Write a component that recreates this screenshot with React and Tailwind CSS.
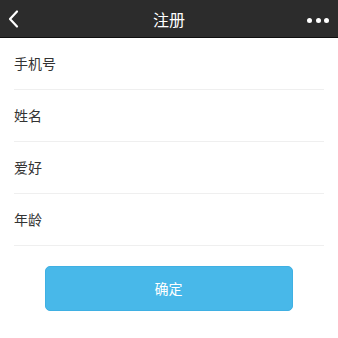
const fields = ['手机号', '姓名', '爱好', '年龄']

export default function App() {
  return (
    <div className="w-[338px] h-[338px] bg-white overflow-hidden" style={{ fontFamily: '"Noto Sans CJK SC", "Noto Sans", sans-serif' }}>
      {/* header */}
      <div className="relative h-[38px] bg-[#2c2c2c] border-b border-[#0f0f0f] flex items-center justify-center">
        <button className="absolute left-[5px] top-[9px] text-white">
          <svg width="16" height="20" viewBox="0 0 16 20" fill="none">
            <path d="M12 2.5 L5 10 L12 17.5" stroke="white" strokeWidth="2.2" strokeLinecap="round" strokeLinejoin="round" />
          </svg>
        </button>
        <span className="text-white text-[16px] leading-none">注册</span>
        <div className="absolute right-[9px] top-[18px] flex gap-[3.5px]">
          <span className="w-[5px] h-[5px] rounded-full bg-white" />
          <span className="w-[5px] h-[5px] rounded-full bg-white" />
          <span className="w-[5px] h-[5px] rounded-full bg-white" />
        </div>
      </div>

      {/* form rows */}
      <div className="px-[14px]">
        {fields.map((f) => (
          <div key={f} className="h-[52px] border-b border-[#efefef] flex items-center">
            <span className="text-[14px] text-[#333]">{f}</span>
          </div>
        ))}
      </div>

      <div className="flex justify-center mt-[20px] pr-[1px]">
        <button className="w-[248px] h-[45px] rounded-[5px] bg-[#48b8e9] border border-[#3fb0e3] text-white text-[14px]">
          确定
        </button>
      </div>
    </div>
  )
}
